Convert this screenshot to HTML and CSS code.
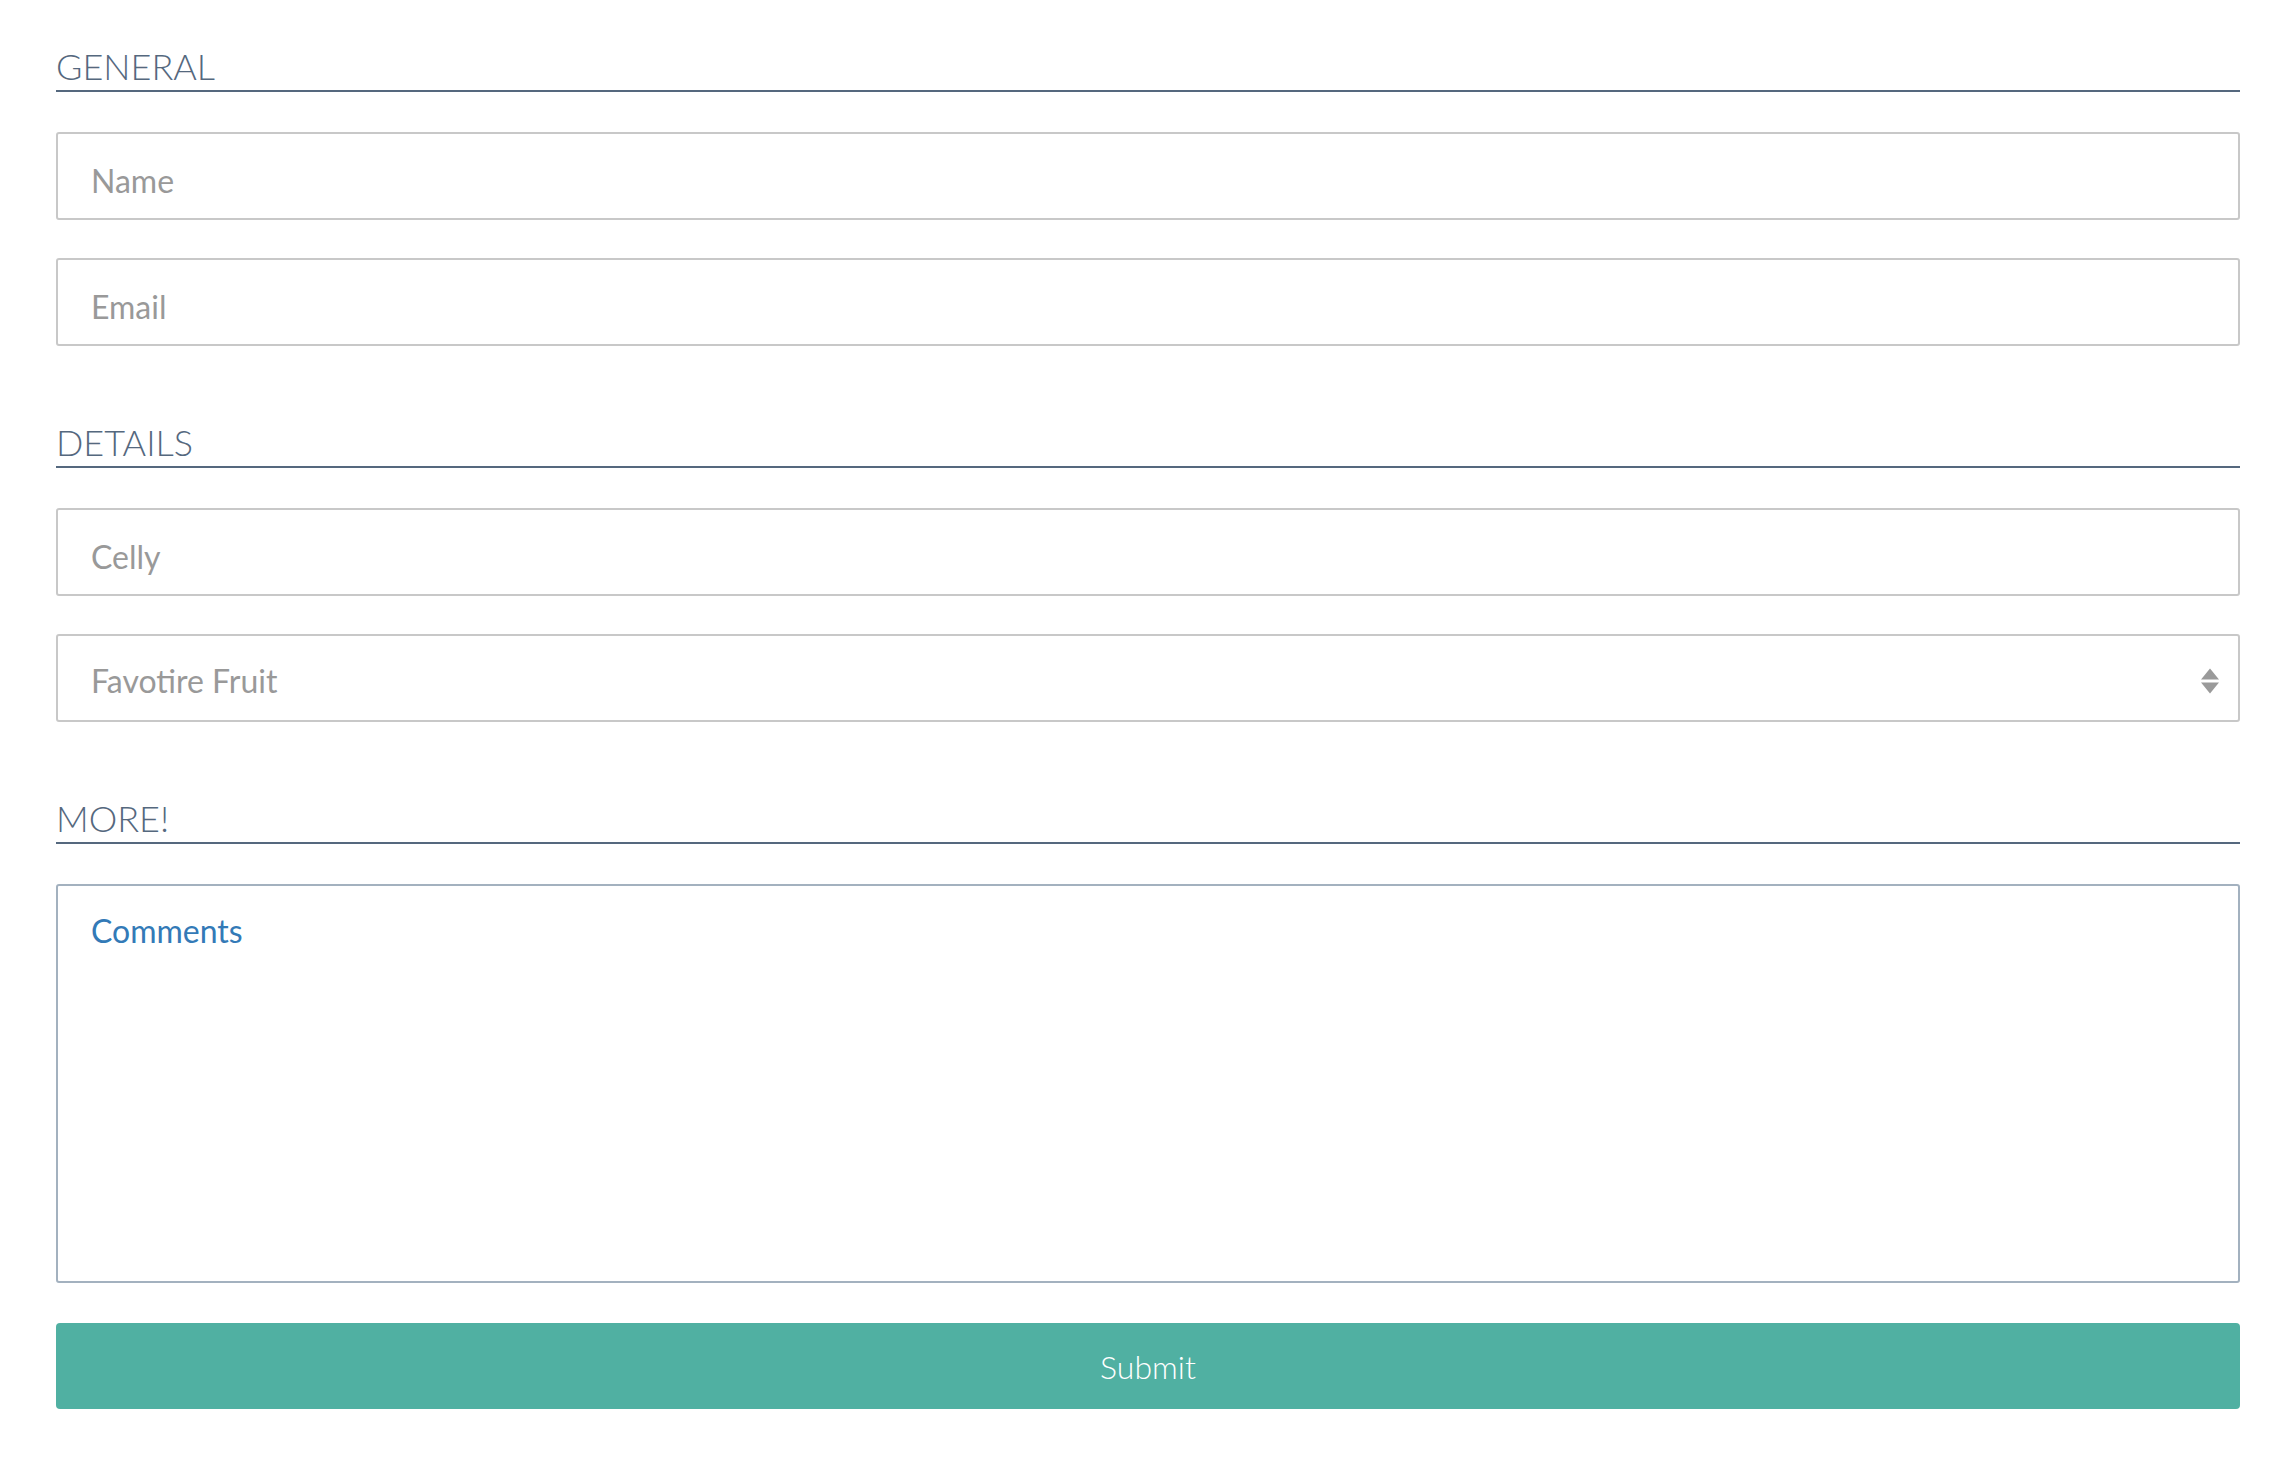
FILE: index.html
```html
<!DOCTYPE html>
<html lang="en">
<head>
    <meta charset="UTF-8">
    <meta name="viewport" content="width=device-width, initial-scale=1.0">
    <title>Form</title>
    <link rel="stylesheet" href="styles.css">
</head>
<body>

    <form class="form">
        <!-- General -->
        <section class="section">
            <h2 class="section-title">GENERAL</h2>
            <div class="fields">
                <input class="field" type="text" placeholder="Name">
                <input class="field" type="email" placeholder="Email">
            </div>
        </section>

        <!-- Details -->
        <section class="section">
            <h2 class="section-title">DETAILS</h2>
            <div class="fields">
                <input class="field" type="tel" placeholder="Celly">
                <div class="select-wrap">
                    <select class="field select">
                        <option>Favotire Fruit</option>
                        <option>Apple</option>
                        <option>Banana</option>
                        <option>Orange</option>
                    </select>
                    <svg class="select-arrows" width="20" height="26" viewBox="0 0 20 26">
                        <path d="M10 0.5 L19 11.5 L1 11.5 Z" fill="#9a9a9a"/>
                        <path d="M1 14.5 L19 14.5 L10 25.5 Z" fill="#9a9a9a"/>
                    </svg>
                </div>
            </div>
        </section>

        <!-- More -->
        <section class="section section-last">
            <h2 class="section-title">MORE!</h2>
            <div class="fields">
                <textarea class="field comments" placeholder="Comments"></textarea>
            </div>
        </section>

        <button type="submit" class="submit-btn">Submit</button>
    </form>

</body>
</html>
```

FILE: styles.css
```css
body {
    margin: 0;
    background-color: #fff;
    font-family: Lato, "Liberation Sans", sans-serif;
}
.form {
    padding: 45px 54px 40px 56px;
}
.section {
    margin-bottom: 75px;
}
.section-last {
    margin-bottom: 0;
}
.section-title {
    margin: 0 0 40px 0;
    padding-bottom: 3px;
    font-size: 36px;
    line-height: 42px;
    font-weight: 300;
    color: #55687e;
    border-bottom: 2px solid #55687e;
}
.fields {
    display: flex;
    flex-direction: column;
    gap: 38px;
}
.field {
    display: block;
    width: 100%;
    height: 88px;
    box-sizing: border-box;
    margin: 0;
    padding: 8px 33px 0 33px;
    font-family: Lato, "Liberation Sans", sans-serif;
    font-size: 32px;
    color: #999;
    background-color: #fff;
    border: 2px solid #c8c8c8;
    border-radius: 3px;
    outline: none;
}
.field::placeholder {
    color: #999;
    opacity: 1;
}
.select-wrap {
    position: relative;
}
.select {
    appearance: none;
    -webkit-appearance: none;
    padding-top: 4px;
}
.select-arrows {
    position: absolute;
    right: 20px;
    top: 34px;
    pointer-events: none;
}
.comments {
    height: 399px;
    padding: 26px 33px;
    line-height: 38px;
    resize: none;
    border-color: #a3b1bf;
}
.comments::placeholder {
    color: #337ab7;
}
.submit-btn {
    display: block;
    width: 100%;
    height: 86px;
    margin-top: 40px;
    padding: 0;
    font-family: Lato, "Liberation Sans", sans-serif;
    font-size: 32px;
    font-weight: 300;
    color: #fff;
    background-color: #50b0a2;
    border: none;
    border-radius: 4px;
    cursor: pointer;
}
.submit-btn:hover {
    background-color: #479f92;
}
```
